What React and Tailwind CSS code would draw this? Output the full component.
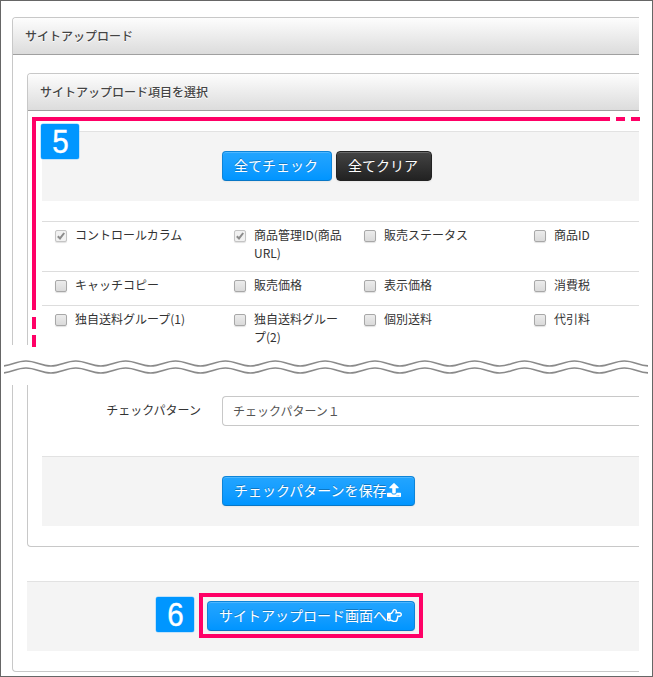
import { FaUpload, FaRegHandPointRight } from "react-icons/fa";

const rows = [
  {
    height: "h-[50px]",
    cells: [
      { label: "コントロールカラム", locked: true },
      { label: "商品管理ID(商品URL)", locked: true },
      { label: "販売ステータス" },
      { label: "商品ID" },
    ],
  },
  {
    height: "h-[34px]",
    cells: [
      { label: "キャッチコピー" },
      { label: "販売価格" },
      { label: "表示価格" },
      { label: "消費税" },
    ],
  },
  {
    height: "h-[50px]",
    cells: [
      { label: "独自送料グループ(1)" },
      { label: "独自送料グループ(2)" },
      { label: "個別送料" },
      { label: "代引料" },
    ],
  },
];

// Wavy line: peaks and troughs alternate every half period
const wavePath = (y) => {
  const half = 24.93;
  let d = `M-23.9 ${y}`;
  for (let i = 0; i < 28; i++) {
    const x = -23.9 + i * half;
    const from = i % 2 === 0 ? y : y + 5;
    const to = i % 2 === 0 ? y + 5 : y;
    d += ` C${x + 10} ${from} ${x + half - 10} ${to} ${x + half} ${to}`;
  }
  return d;
};

function PanelTitle({ children }) {
  return (
    <div className="h-[37px] border-b border-[#a0a0a0] bg-linear-to-b from-[#fdfdfd] to-[#dcdcdc] pl-3 text-xs leading-[35px] font-medium text-[#444] [text-shadow:0_1px_0_#fff]">
      {children}
    </div>
  );
}

function Button({ dark, className = "", children }) {
  const color = dark
    ? "border-[#222] bg-linear-to-b from-[#444] to-[#222]"
    : "border-[#0d84d8] border-b-[#0877c6] bg-linear-to-b from-[#22a5ff] to-[#0095ff]";
  return (
    <button
      className={`flex h-[30px] items-center rounded border pb-0.5 pl-[11px] text-sm leading-5 whitespace-nowrap text-white shadow-[inset_0_1px_0_rgba(255,255,255,0.2),0_1px_2px_rgba(0,0,0,0.05)] [text-shadow:0_-1px_0_rgba(0,0,0,0.25)] ${color} ${className}`}
    >
      {children}
    </button>
  );
}

function Checkbox({ locked }) {
  return (
    <span
      className={`mt-1 h-3 w-3 shrink-0 rounded-[2px] border shadow-[0_1px_1px_rgba(0,0,0,0.12)] ${
        locked ? "border-[#c4c4c4] bg-[#f1f1f1]" : "border-[#a8a8a8] bg-linear-to-b from-[#ececec] to-[#dadada]"
      }`}
    >
      {locked && (
        <svg viewBox="0 0 10 10" className="block h-2.5 w-2.5">
          <path d="M1.8 5.2 L4 7.4 L8.2 2" fill="none" stroke="#8c8c8c" strokeWidth="2" />
        </svg>
      )}
    </span>
  );
}

function Actions({ className = "", children }) {
  return (
    <div className={`flex h-[70px] gap-1 border-t border-[#e2e2e2] bg-[#f4f4f4] pt-[19px] ${className}`}>
      {children}
    </div>
  );
}

function Step({ className, children }) {
  return (
    <div
      className={`absolute flex h-[35px] w-[38px] items-center justify-center rounded-[2px] bg-[#0096ff] pb-0.5 font-['Liberation_Sans'] text-white shadow-[0_0_0_0.5px_#8fd0ff] ${className}`}
    >
      <span className="scale-x-[0.87] text-[34px] leading-none [-webkit-text-stroke:0.4px_white]">{children}</span>
    </div>
  );
}

export default function App() {
  return (
    <div className="relative flex h-[677px] w-[653px] flex-col overflow-hidden border border-[#666] bg-white font-['Noto_Sans_CJK_JP',sans-serif] text-xs text-[#333]">
      {/* Upper part of the panel */}
      <div className="ml-[11px] h-[344px] w-[627px] overflow-hidden pt-4">
        <div className="h-[400px] overflow-hidden rounded-tl border-t border-l border-[#c8c8c8]">
          <PanelTitle>サイトアップロード</PanelTitle>
          <div className="mt-[18px] ml-[14px] h-[400px] overflow-hidden rounded-tl border-t border-l border-[#c8c8c8]">
            <PanelTitle>サイトアップロード項目を選択</PanelTitle>
            <div className="pt-5 pl-[14px]">
              <Actions className="pl-[180px]">
                <Button className="w-[110px]">全てチェック</Button>
                <Button dark className="w-[96px]">全てクリア</Button>
              </Actions>
              <div className="mt-5">
                {rows.map((row, i) => (
                  <div
                    key={i}
                    className={`grid grid-cols-[179px_130px_170px_1fr] border-t border-[#ddd] pt-1 ${row.height}`}
                  >
                    {row.cells.map((cell) => (
                      <label key={cell.label} className="flex gap-2 pr-[5px] pl-[13px] leading-[18px]">
                        <Checkbox locked={cell.locked} />
                        <span>{cell.label}</span>
                      </label>
                    ))}
                  </div>
                ))}
              </div>
            </div>
          </div>
        </div>
      </div>

      {/* Torn edge between the two parts */}
      <svg className="mt-3 ml-[3px] h-5 w-[644px]" viewBox="4 357 644 20">
        <path d={wavePath(361)} fill="none" stroke="#8a8a8a" strokeWidth="1.7" />
        <path d={wavePath(368)} fill="none" stroke="#8a8a8a" strokeWidth="1.7" />
      </svg>

      {/* Lower part of the panel */}
      <div className="mt-2 ml-[11px] h-[287px] w-[627px] rounded-bl border-b border-l border-[#c8c8c8]">
        <div className="ml-[14px] h-[162px] rounded-bl border-b border-l border-[#c8c8c8] pt-[11px] pl-[14px]">
          <div className="flex">
            <span className="w-[159px] pt-[5px] text-right leading-[18px]">チェックパターン</span>
            <div className="ml-[21px] h-[30px] flex-1 rounded-l border border-r-0 border-[#c8c8c8] pl-2.5 leading-[28px] text-[#555]">
              チェックパターン１
            </div>
          </div>
          <Actions className="mt-[30px] pl-[180px]">
            <Button className="w-[193px]">
              チェックパターンを保存
              <FaUpload size={14} />
            </Button>
          </Actions>
        </div>
        <Actions className="mt-[34px] ml-[14px] pl-[180px]">
          <Button className="w-[208px]">
            サイトアップロード画面へ
            <FaRegHandPointRight size={15} />
          </Button>
        </Actions>
      </div>

      {/* Highlight lines */}
      <div className="absolute top-[116px] left-[31px] h-[193px] w-[578px] border-t-4 border-l-4 border-[#ff0066]" />
      <div className="absolute top-[116px] left-[615px] flex gap-1.5">
        <i className="h-1 w-[9px] bg-[#ff0066]" />
        <i className="h-1 w-[9px] bg-[#ff0066]" />
      </div>
      <div className="absolute top-[316px] left-[31px] flex flex-col gap-1.5">
        <i className="h-3 w-1 bg-[#ff0066]" />
        <i className="h-3 w-1 bg-[#ff0066]" />
      </div>
      <div className="absolute top-[592px] left-[198px] h-[45px] w-[224px] border-4 border-[#ff0066]" />
      <Step className="top-[123px] left-[40px]">5</Step>
      <Step className="top-[596px] left-[155px]">6</Step>
    </div>
  );
}
